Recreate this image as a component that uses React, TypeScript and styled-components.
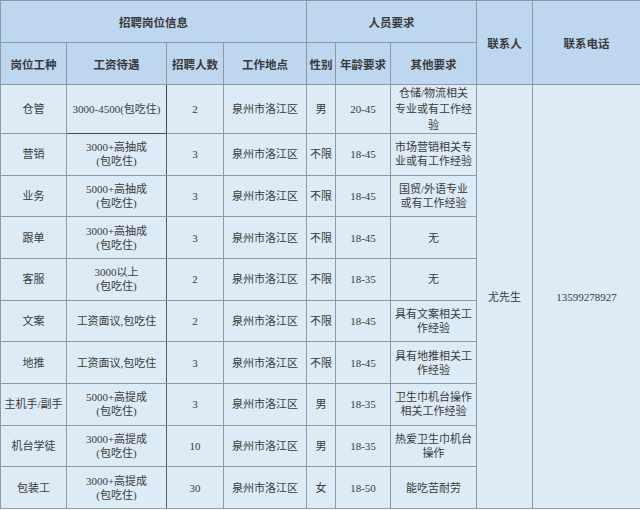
import styled, { createGlobalStyle, css } from 'styled-components';

const GlobalStyle = createGlobalStyle`
  html, body {
    margin: 0;
    padding: 0;
    background: #ffffff;
  }
  body {
    font-family: "Liberation Serif", "Noto Sans CJK SC", serif;
  }
`;

type JobRow = {
  title: string;
  salary: string[];
  count: string;
  place: string;
  gender: string;
  age: string;
  other: string[];
};

const jobs: JobRow[] = [
  {
    title: '仓管',
    salary: ['3000-4500(包吃住)'],
    count: '2',
    place: '泉州市洛江区',
    gender: '男',
    age: '20-45',
    other: ['仓储/物流相关', '专业或有工作经', '验'],
  },
  {
    title: '营销',
    salary: ['3000+高抽成', '(包吃住)'],
    count: '3',
    place: '泉州市洛江区',
    gender: '不限',
    age: '18-45',
    other: ['市场营销相关专', '业或有工作经验'],
  },
  {
    title: '业务',
    salary: ['5000+高抽成', '(包吃住)'],
    count: '3',
    place: '泉州市洛江区',
    gender: '不限',
    age: '18-45',
    other: ['国贸/外语专业', '或有工作经验'],
  },
  {
    title: '跟单',
    salary: ['3000+高抽成', '(包吃住)'],
    count: '3',
    place: '泉州市洛江区',
    gender: '不限',
    age: '18-45',
    other: ['无'],
  },
  {
    title: '客服',
    salary: ['3000以上', '(包吃住)'],
    count: '2',
    place: '泉州市洛江区',
    gender: '不限',
    age: '18-35',
    other: ['无'],
  },
  {
    title: '文案',
    salary: ['工资面议,包吃住'],
    count: '2',
    place: '泉州市洛江区',
    gender: '不限',
    age: '18-45',
    other: ['具有文案相关工', '作经验'],
  },
  {
    title: '地推',
    salary: ['工资面议,包吃住'],
    count: '3',
    place: '泉州市洛江区',
    gender: '不限',
    age: '18-45',
    other: ['具有地推相关工', '作经验'],
  },
  {
    title: '主机手/副手',
    salary: ['5000+高提成', '(包吃住)'],
    count: '3',
    place: '泉州市洛江区',
    gender: '男',
    age: '18-35',
    other: ['卫生巾机台操作', '相关工作经验'],
  },
  {
    title: '机台学徒',
    salary: ['3000+高提成', '(包吃住)'],
    count: '10',
    place: '泉州市洛江区',
    gender: '男',
    age: '18-35',
    other: ['热爱卫生巾机台', '操作'],
  },
  {
    title: '包装工',
    salary: ['3000+高提成', '(包吃住)'],
    count: '30',
    place: '泉州市洛江区',
    gender: '女',
    age: '18-50',
    other: ['能吃苦耐劳'],
  },
];

const subHeads = ['岗位工种', '工资待遇', '招聘人数', '工作地点', '性别', '年龄要求', '其他要求'];

const App = () => {
  return (
    <>
      <GlobalStyle />
      <Table>
        <HeadCell $colSpan={4}>招聘岗位信息</HeadCell>
        <HeadCell $colSpan={3}>人员要求</HeadCell>
        <HeadCell $rowSpan={2}>联系人</HeadCell>
        <HeadCell $rowSpan={2}>联系电话</HeadCell>
        {subHeads.map((h) => (
          <HeadCell key={h}>{h}</HeadCell>
        ))}

        <Cell style={{ gridColumn: 8, gridRow: '3 / span 10' }}>尤先生</Cell>
        <Cell style={{ gridColumn: 9, gridRow: '3 / span 10' }}>13599278927</Cell>

        {jobs.map((job, i) => (
          <Row key={job.title} job={job} first={i === 0} />
        ))}
      </Table>
    </>
  );
};

const Row = ({ job, first }: { job: JobRow; first: boolean }) => (
  <>
    <Cell>{job.title}</Cell>
    <Cell $divider $selected={first}>
      {job.salary.map((line) => (
        <Line key={line}>{line}</Line>
      ))}
    </Cell>
    <Cell>{job.count}</Cell>
    <Cell>{job.place}</Cell>
    <Cell>{job.gender}</Cell>
    <Cell>{job.age}</Cell>
    <Cell $tight={job.other.length > 2}>
      {job.other.map((line) => (
        <Line key={line}>{line}</Line>
      ))}
    </Cell>
  </>
);

export default App;

const Table = styled.div`
  box-sizing: border-box;
  display: grid;
  grid-template-columns: 65px 99px 56px 82px 28px 54px 85px 55px 107px;
  grid-template-rows: 41px 41px repeat(10, 1fr);
  gap: 1px;
  width: 640px;
  height: 509px;
  padding: 1px 0 1px 1px;
  background-color: #8d99a6;
`;

const HeadCell = styled.div<{ $colSpan?: number; $rowSpan?: number }>`
  display: flex;
  align-items: center;
  justify-content: center;
  background-color: #bdd7ee;
  color: #3a3a3a;
  font-size: 11.5px;
  font-weight: 700;
  white-space: nowrap;
  ${({ $colSpan }) => $colSpan && `grid-column: span ${$colSpan};`}
  ${({ $rowSpan }) => $rowSpan && `grid-row: span ${$rowSpan};`}
`;

const Cell = styled.div<{ $divider?: boolean; $selected?: boolean; $tight?: boolean }>`
  display: flex;
  flex-direction: column;
  align-items: center;
  justify-content: center;
  background-color: #ddebf7;
  color: #3a3a3a;
  font-size: 11px;
  line-height: 14px;
  text-align: center;
  white-space: nowrap;
  ${({ $tight }) => $tight && 'line-height: 16px;'}
  ${({ $divider }) => $divider && 'box-shadow: 1px 0 0 #555d66;'}
  ${({ $selected }) =>
    $selected &&
    css`
      box-shadow: 1px 0 0 #444a50, 0 1px 0 #444a50, 1px 1px 0 #444a50;
    `}
`;

const Line = styled.span`
  display: block;
`;
